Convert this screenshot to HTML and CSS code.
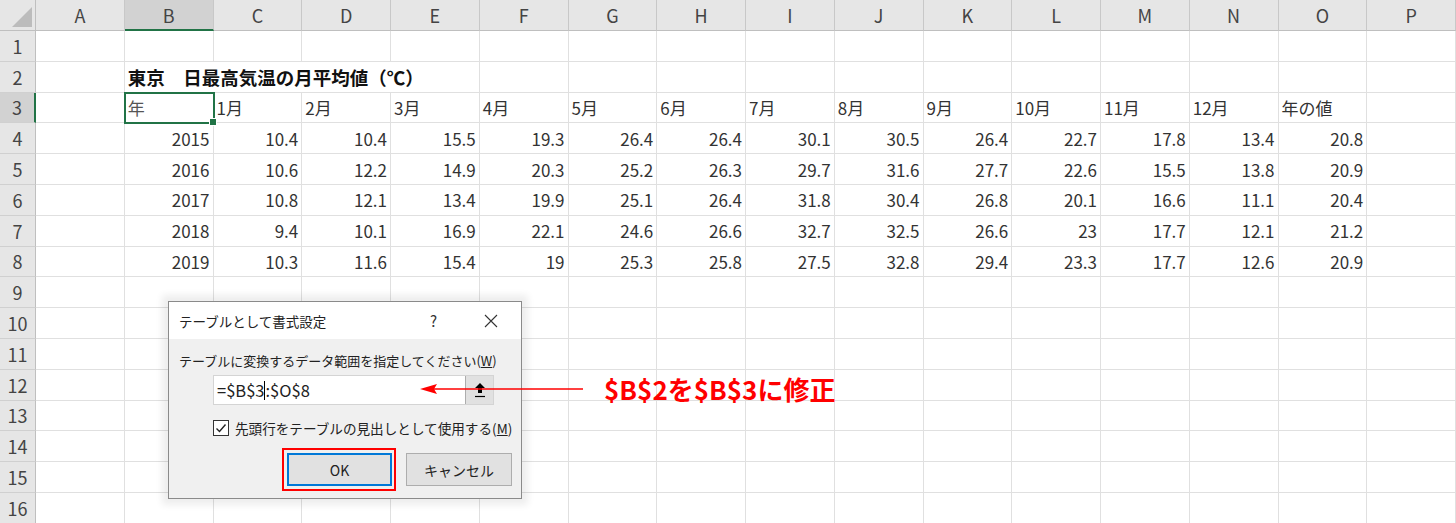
FILE: index.html
```html
<!DOCTYPE html>
<html lang="ja">
<head>
    <meta charset="UTF-8">
    <title>テーブルとして書式設定</title>
    <link rel="stylesheet" href="styles.css">
</head>
<body>

    <div class="sheet">
        <!-- column headers -->
        <div class="corner"><span class="corner-mark"></span></div>
        <div class="col-head">A</div>
        <div class="col-head selected">B</div>
        <div class="col-head">C</div>
        <div class="col-head">D</div>
        <div class="col-head">E</div>
        <div class="col-head">F</div>
        <div class="col-head">G</div>
        <div class="col-head">H</div>
        <div class="col-head">I</div>
        <div class="col-head">J</div>
        <div class="col-head">K</div>
        <div class="col-head">L</div>
        <div class="col-head">M</div>
        <div class="col-head">N</div>
        <div class="col-head">O</div>
        <div class="col-head">P</div>

        <!-- row 1 -->
        <div class="row-head">1</div>
        <div class="cell"></div><div class="cell"></div><div class="cell"></div><div class="cell"></div>
        <div class="cell"></div><div class="cell"></div><div class="cell"></div><div class="cell"></div>
        <div class="cell"></div><div class="cell"></div><div class="cell"></div><div class="cell"></div>
        <div class="cell"></div><div class="cell"></div><div class="cell"></div><div class="cell"></div>

        <!-- row 2 : title spills over B..E -->
        <div class="row-head">2</div>
        <div class="cell"></div>
        <div class="cell title">東京　日最高気温の月平均値（℃）</div>
        <div class="cell"></div><div class="cell"></div><div class="cell"></div><div class="cell"></div>
        <div class="cell"></div><div class="cell"></div><div class="cell"></div><div class="cell"></div>
        <div class="cell"></div><div class="cell"></div><div class="cell"></div>

        <!-- row 3 : headings -->
        <div class="row-head selected">3</div>
        <div class="cell"></div>
        <div class="cell active">年<span class="fill-handle"></span></div>
        <div class="cell">1月</div>
        <div class="cell">2月</div>
        <div class="cell">3月</div>
        <div class="cell">4月</div>
        <div class="cell">5月</div>
        <div class="cell">6月</div>
        <div class="cell">7月</div>
        <div class="cell">8月</div>
        <div class="cell">9月</div>
        <div class="cell">10月</div>
        <div class="cell">11月</div>
        <div class="cell">12月</div>
        <div class="cell">年の値</div>
        <div class="cell"></div>

        <!-- row 4 -->
        <div class="row-head">4</div>
        <div class="cell"></div>
        <div class="cell num">2015</div>
        <div class="cell num">10.4</div><div class="cell num">10.4</div><div class="cell num">15.5</div>
        <div class="cell num">19.3</div><div class="cell num">26.4</div><div class="cell num">26.4</div>
        <div class="cell num">30.1</div><div class="cell num">30.5</div><div class="cell num">26.4</div>
        <div class="cell num">22.7</div><div class="cell num">17.8</div><div class="cell num">13.4</div>
        <div class="cell num">20.8</div>
        <div class="cell"></div>

        <!-- row 5 -->
        <div class="row-head">5</div>
        <div class="cell"></div>
        <div class="cell num">2016</div>
        <div class="cell num">10.6</div><div class="cell num">12.2</div><div class="cell num">14.9</div>
        <div class="cell num">20.3</div><div class="cell num">25.2</div><div class="cell num">26.3</div>
        <div class="cell num">29.7</div><div class="cell num">31.6</div><div class="cell num">27.7</div>
        <div class="cell num">22.6</div><div class="cell num">15.5</div><div class="cell num">13.8</div>
        <div class="cell num">20.9</div>
        <div class="cell"></div>

        <!-- row 6 -->
        <div class="row-head">6</div>
        <div class="cell"></div>
        <div class="cell num">2017</div>
        <div class="cell num">10.8</div><div class="cell num">12.1</div><div class="cell num">13.4</div>
        <div class="cell num">19.9</div><div class="cell num">25.1</div><div class="cell num">26.4</div>
        <div class="cell num">31.8</div><div class="cell num">30.4</div><div class="cell num">26.8</div>
        <div class="cell num">20.1</div><div class="cell num">16.6</div><div class="cell num">11.1</div>
        <div class="cell num">20.4</div>
        <div class="cell"></div>

        <!-- row 7 -->
        <div class="row-head">7</div>
        <div class="cell"></div>
        <div class="cell num">2018</div>
        <div class="cell num">9.4</div><div class="cell num">10.1</div><div class="cell num">16.9</div>
        <div class="cell num">22.1</div><div class="cell num">24.6</div><div class="cell num">26.6</div>
        <div class="cell num">32.7</div><div class="cell num">32.5</div><div class="cell num">26.6</div>
        <div class="cell num">23</div><div class="cell num">17.7</div><div class="cell num">12.1</div>
        <div class="cell num">21.2</div>
        <div class="cell"></div>

        <!-- row 8 -->
        <div class="row-head">8</div>
        <div class="cell"></div>
        <div class="cell num">2019</div>
        <div class="cell num">10.3</div><div class="cell num">11.6</div><div class="cell num">15.4</div>
        <div class="cell num">19</div><div class="cell num">25.3</div><div class="cell num">25.8</div>
        <div class="cell num">27.5</div><div class="cell num">32.8</div><div class="cell num">29.4</div>
        <div class="cell num">23.3</div><div class="cell num">17.7</div><div class="cell num">12.6</div>
        <div class="cell num">20.9</div>
        <div class="cell"></div>

        <!-- rows 9 - 16 (empty) -->
        <div class="row-head">9</div>
        <div class="cell"></div><div class="cell"></div><div class="cell"></div><div class="cell"></div>
        <div class="cell"></div><div class="cell"></div><div class="cell"></div><div class="cell"></div>
        <div class="cell"></div><div class="cell"></div><div class="cell"></div><div class="cell"></div>
        <div class="cell"></div><div class="cell"></div><div class="cell"></div><div class="cell"></div>

        <div class="row-head">10</div>
        <div class="cell"></div><div class="cell"></div><div class="cell"></div><div class="cell"></div>
        <div class="cell"></div><div class="cell"></div><div class="cell"></div><div class="cell"></div>
        <div class="cell"></div><div class="cell"></div><div class="cell"></div><div class="cell"></div>
        <div class="cell"></div><div class="cell"></div><div class="cell"></div><div class="cell"></div>

        <div class="row-head">11</div>
        <div class="cell"></div><div class="cell"></div><div class="cell"></div><div class="cell"></div>
        <div class="cell"></div><div class="cell"></div><div class="cell"></div><div class="cell"></div>
        <div class="cell"></div><div class="cell"></div><div class="cell"></div><div class="cell"></div>
        <div class="cell"></div><div class="cell"></div><div class="cell"></div><div class="cell"></div>

        <div class="row-head">12</div>
        <div class="cell"></div><div class="cell"></div><div class="cell"></div><div class="cell"></div>
        <div class="cell"></div><div class="cell"></div><div class="cell"></div><div class="cell"></div>
        <div class="cell"></div><div class="cell"></div><div class="cell"></div><div class="cell"></div>
        <div class="cell"></div><div class="cell"></div><div class="cell"></div><div class="cell"></div>

        <div class="row-head">13</div>
        <div class="cell"></div><div class="cell"></div><div class="cell"></div><div class="cell"></div>
        <div class="cell"></div><div class="cell"></div><div class="cell"></div><div class="cell"></div>
        <div class="cell"></div><div class="cell"></div><div class="cell"></div><div class="cell"></div>
        <div class="cell"></div><div class="cell"></div><div class="cell"></div><div class="cell"></div>

        <div class="row-head">14</div>
        <div class="cell"></div><div class="cell"></div><div class="cell"></div><div class="cell"></div>
        <div class="cell"></div><div class="cell"></div><div class="cell"></div><div class="cell"></div>
        <div class="cell"></div><div class="cell"></div><div class="cell"></div><div class="cell"></div>
        <div class="cell"></div><div class="cell"></div><div class="cell"></div><div class="cell"></div>

        <div class="row-head">15</div>
        <div class="cell"></div><div class="cell"></div><div class="cell"></div><div class="cell"></div>
        <div class="cell"></div><div class="cell"></div><div class="cell"></div><div class="cell"></div>
        <div class="cell"></div><div class="cell"></div><div class="cell"></div><div class="cell"></div>
        <div class="cell"></div><div class="cell"></div><div class="cell"></div><div class="cell"></div>

        <div class="row-head">16</div>
        <div class="cell"></div><div class="cell"></div><div class="cell"></div><div class="cell"></div>
        <div class="cell"></div><div class="cell"></div><div class="cell"></div><div class="cell"></div>
        <div class="cell"></div><div class="cell"></div><div class="cell"></div><div class="cell"></div>
        <div class="cell"></div><div class="cell"></div><div class="cell"></div><div class="cell"></div>
    </div>

    <!-- Format as Table dialog -->
    <div class="dialog">
        <div class="dialog-title">
            <span class="dialog-caption">テーブルとして書式設定</span>
            <span class="dialog-help">?</span>
            <svg class="dialog-close" width="14" height="14" viewBox="0 0 14 14">
                <path d="M1 1 L13 13 M13 1 L1 13" stroke="#333" stroke-width="1.1" fill="none"/>
            </svg>
        </div>
        <div class="dialog-body">
            <div class="field-label">テーブルに変換するデータ範囲を指定してください(<u>W</u>)</div>
            <div class="range-box">
                <div class="range-input">=$B$3<span class="caret"></span>:$O$8</div>
                <div class="range-btn">
                    <svg width="14" height="18" viewBox="0 0 14 18">
                        <path d="M7 2 L12 7 L9 7 L9 12 L5 12 L5 7 L2 7 Z" fill="#000"/>
                        <path d="M2 15.5 H12" stroke="#000" stroke-width="1.2"/>
                    </svg>
                </div>
            </div>
            <label class="check-row">
                <span class="check-box">
                    <svg width="14" height="14" viewBox="0 0 14 14">
                        <path d="M2.5 7.5 L5.5 10.5 L11.5 3.5" stroke="#222" stroke-width="1.4" fill="none"/>
                    </svg>
                </span>
                <span class="check-text">先頭行をテーブルの見出しとして使用する(<u>M</u>)</span>
            </label>
            <div class="button-row">
                <span class="highlight">
                    <button class="btn btn-default">OK</button>
                </span>
                <button class="btn">キャンセル</button>
            </div>
        </div>
    </div>

    <!-- annotation -->
    <svg class="note-arrow" width="175" height="20" viewBox="0 0 175 20">
        <line x1="18" y1="9" x2="168" y2="9" stroke="#ff0000" stroke-width="1.5"/>
        <polygon points="5,9 22,4 19,9 22,14" fill="#ff0000"/>
    </svg>
    <div class="note-text">$B$2を$B$3に修正</div>

</body>
</html>
```

FILE: styles.css
```css
body {
    margin: 0;
    background-color: #ffffff;
    font-family: "Noto Sans CJK JP", "Noto Sans", sans-serif;
    color: #222222;
    width: 1456px;
    height: 523px;
    overflow: hidden;
    position: relative;
}

/* spreadsheet grid */
.sheet {
    display: grid;
    grid-template-columns: 36px repeat(16, 88.75px);
    grid-template-rows: 31px repeat(16, 30.8px);
    width: 1456px;
}
.corner {
    background-color: #e6e6e6;
    border-right: 1px solid #bfbfbf;
    border-bottom: 1px solid #bfbfbf;
    position: relative;
}
.corner-mark {
    position: absolute;
    right: 3px;
    bottom: 3px;
    width: 0;
    height: 0;
    border-left: 20px solid transparent;
    border-bottom: 20px solid #bcbcbc;
}
.col-head {
    background-color: #e6e6e6;
    border-right: 1px solid #c8c8c8;
    border-bottom: 1px solid #bfbfbf;
    color: #444444;
    font-size: 18px;
    display: flex;
    align-items: center;
    justify-content: center;
}
.col-head.selected {
    background-color: #d2d2d2;
    border-bottom: 2px solid #217346;
}
.row-head {
    background-color: #e6e6e6;
    border-right: 1px solid #bfbfbf;
    border-bottom: 1px solid #d0d0d0;
    color: #444444;
    font-size: 18px;
    display: flex;
    align-items: center;
    justify-content: center;
}
.row-head.selected {
    background-color: #d2d2d2;
    border-right: 2px solid #217346;
}
.cell {
    border-right: 1px solid #e0e0e0;
    border-bottom: 1px solid #e0e0e0;
    font-size: 17px;
    color: #333333;
    padding: 0 3px;
    display: flex;
    align-items: center;
    white-space: nowrap;
    min-width: 0;
}
.cell.num {
    justify-content: flex-end;
}
.cell.title {
    grid-column: span 4;
    font-weight: bold;
    color: #111111;
    font-size: 18.5px;
}
.cell.active {
    position: relative;
    outline: 2px solid #217346;
    outline-offset: -1px;
    color: #555555;
}
.fill-handle {
    position: absolute;
    right: -4px;
    bottom: -4px;
    width: 6px;
    height: 6px;
    background-color: #217346;
    border: 1px solid #ffffff;
}

/* dialog */
.dialog {
    position: absolute;
    left: 168px;
    top: 301px;
    width: 352px;
    height: 196px;
    border: 1px solid #8a8a8a;
    background-color: #f0f0f0;
    box-shadow: 0 0 7px 6px rgba(0, 0, 0, 0.07);
    display: flex;
    flex-direction: column;
    font-size: 13px;
    color: #222222;
    white-space: nowrap;
}
.dialog-title {
    height: 37px;
    background-color: #ffffff;
    display: flex;
    align-items: center;
    padding: 0 23px 0 10px;
    font-size: 13.5px;
}
.dialog-caption {
    flex: 1;
}
.dialog-help {
    font-size: 15px;
    color: #333333;
    margin-right: 47px;
}
.dialog-body {
    display: flex;
    flex-direction: column;
    padding: 12px 9px 0 10px;
}
.field-label {
    line-height: 20px;
}
.range-box {
    display: flex;
    margin: 4px 0 0 34px;
    width: 281px;
    height: 30px;
    border: 1px solid #d4d4d4;
    background-color: #ffffff;
    box-sizing: border-box;
}
.range-input {
    flex: 1;
    display: flex;
    align-items: center;
    padding-left: 3px;
    font-size: 16.5px;
}
.caret {
    display: inline-block;
    width: 1px;
    height: 19px;
    background-color: #000000;
}
.range-btn {
    width: 27px;
    background-color: #e1e1e1;
    border-left: 1px solid #adadad;
    display: flex;
    align-items: center;
    justify-content: center;
}
.check-row {
    display: flex;
    align-items: center;
    margin: 14px 0 0 34px;
    gap: 6px;
    height: 18px;
}
.check-text {
    font-size: 13.6px;
}
.check-box {
    width: 14px;
    height: 14px;
    border: 1px solid #333333;
    background-color: #ffffff;
    display: flex;
}
.button-row {
    display: flex;
    justify-content: flex-end;
    align-items: center;
    gap: 10px;
    margin-top: 11px;
}
.highlight {
    border: 2px solid #ff0000;
    padding: 3px 2px 3px 3px;
    display: flex;
}
.btn {
    width: 106px;
    height: 33px;
    background-color: #e1e1e1;
    border: 1px solid #adadad;
    font-family: "Noto Sans CJK JP", "Noto Sans", sans-serif;
    font-size: 14px;
    color: #222222;
    padding: 0;
}
.btn-default {
    width: 105px;
    border: 2px solid #0078d7;
}

/* red annotation */
.note-arrow {
    position: absolute;
    left: 415px;
    top: 380px;
}
.note-text {
    position: absolute;
    left: 604px;
    top: 371px;
    color: #ff0000;
    font-size: 26px;
    font-weight: bold;
    line-height: 35px;
    white-space: nowrap;
}
```
